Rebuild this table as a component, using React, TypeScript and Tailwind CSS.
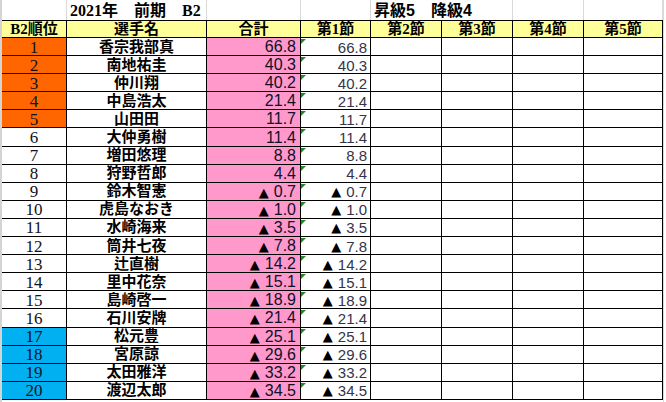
import React from "react";

const players: [string, number][] = [
  ["香宗我部真", 66.8],
  ["南地祐圭", 40.3],
  ["仲川翔", 40.2],
  ["中島浩太", 21.4],
  ["山田田", 11.7],
  ["大仲勇樹", 11.4],
  ["増田悠理", 8.8],
  ["狩野哲郎", 4.4],
  ["鈴木智憲", -0.7],
  ["虎島なおき", -1.0],
  ["水崎海来", -3.5],
  ["筒井七夜", -7.8],
  ["辻直樹", -14.2],
  ["里中花奈", -15.1],
  ["島崎啓一", -18.9],
  ["石川安牌", -21.4],
  ["松元豊", -25.1],
  ["宮原諒", -29.6],
  ["太田雅洋", -33.2],
  ["渡辺太郎", -34.5],
];

const serif = "font-['Liberation_Serif','Noto_Sans_CJK_JP',serif]";
const gothic = "font-['Liberation_Sans','Noto_Sans_CJK_JP',sans-serif]";

function Score({ value, className }: { value: number; className: string }) {
  const neg = value < 0;
  return (
    <span className={`flex items-end whitespace-nowrap ${className}`}>
      {neg && (
        <span className="font-['DejaVu_Sans',sans-serif] text-[13px] leading-none mr-[5px] mb-[1px] text-black">▲</span>
      )}
      <span>{Math.abs(value).toFixed(1)}</span>
    </span>
  );
}

function ErrorMark() {
  return (
    <svg className="absolute left-0 top-[1px]" width="5" height="5" viewBox="0 0 5 5">
      <polygon points="0,0 5,0 0,5" fill="#1e8c1e" />
    </svg>
  );
}

export default function App() {
  return (
    <div className={`w-[666px] h-[402px] bg-white flex overflow-hidden text-black ${serif}`}>
      <div className="w-[2px] shrink-0 bg-[#d4d4d4]" />

      <div className="flex flex-col shrink-0">
        {/* title row */}
        <div className="flex h-[21px] border-b border-black">
          <div className="w-[65px] border-r border-[#d9d9d9]" />
          <div className="w-[140px] border-r border-[#d9d9d9] flex items-end pl-[3px] pb-[1px] text-[16px] leading-none font-bold whitespace-nowrap">
            2021年　前期　B2
          </div>
          <div className="w-[94px] border-r border-[#d9d9d9]" />
          <div className="w-[70px] border-r border-[#d9d9d9]" />
          <div className="w-[71px] relative">
            <span className={`absolute left-[3px] bottom-[1px] text-[16px] leading-none font-bold whitespace-nowrap ${gothic}`}>
              昇級5　降級4
            </span>
          </div>
          <div className="w-[71px] border-r border-[#d9d9d9]" />
          <div className="w-[71px] border-r border-[#d9d9d9]" />
          <div className="w-[79px] border-r border-[#d9d9d9]" />
        </div>

        {/* header row */}
        <div className="flex h-[17px] bg-[#ffff99] border-b border-black text-[15px] leading-none font-bold">
          <div className="w-[65px] border-r border-black flex items-center justify-center">B2順位</div>
          <div className="w-[140px] border-r border-black flex items-center justify-center">選手名</div>
          <div className="w-[94px] border-r border-black flex items-center justify-center">合計</div>
          <div className="w-[70px] border-r border-black flex items-center justify-center">第1節</div>
          <div className="w-[71px] border-r border-black flex items-center justify-center">第2節</div>
          <div className="w-[71px] border-r border-black flex items-center justify-center">第3節</div>
          <div className="w-[71px] border-r border-black flex items-center justify-center">第4節</div>
          <div className="w-[79px] border-r border-black flex items-center justify-center">第5節</div>
        </div>

        {players.map(([name, score], i) => {
          const rank = i + 1;
          const rankBg = rank <= 5 ? "bg-[#ff6600]" : rank >= 17 ? "bg-[#00b0f0]" : "bg-white";
          return (
            <div key={name} className="flex h-[18.1px] border-b border-black">
              <div className={`w-[65px] border-r border-black flex items-center justify-center pt-[1px] text-[17px] leading-none text-[#111122] ${rankBg}`}>
                {rank}
              </div>
              <div className="w-[140px] border-r border-black flex items-center justify-center pt-[1px] text-[15px] leading-none font-bold">
                {name}
              </div>
              <div className="w-[94px] border-r border-black bg-[#ff99cc] flex items-center justify-end pr-[4px] pt-[1px]">
                <Score value={score} className={`text-[16px] leading-none text-[#101028] ${gothic}`} />
              </div>
              <div className="w-[70px] border-r border-black relative flex items-center justify-end pr-[3px] pt-[1px]">
                <ErrorMark />
                <Score value={score} className={`text-[15px] leading-none text-[#34344a] ${gothic}`} />
              </div>
              <div className="w-[71px] border-r border-black" />
              <div className="w-[71px] border-r border-black" />
              <div className="w-[71px] border-r border-black" />
              <div className="w-[79px] border-r border-black" />
            </div>
          );
        })}
      </div>

      <div className="w-[1px] shrink-0 bg-[#dadada]" />
    </div>
  );
}
